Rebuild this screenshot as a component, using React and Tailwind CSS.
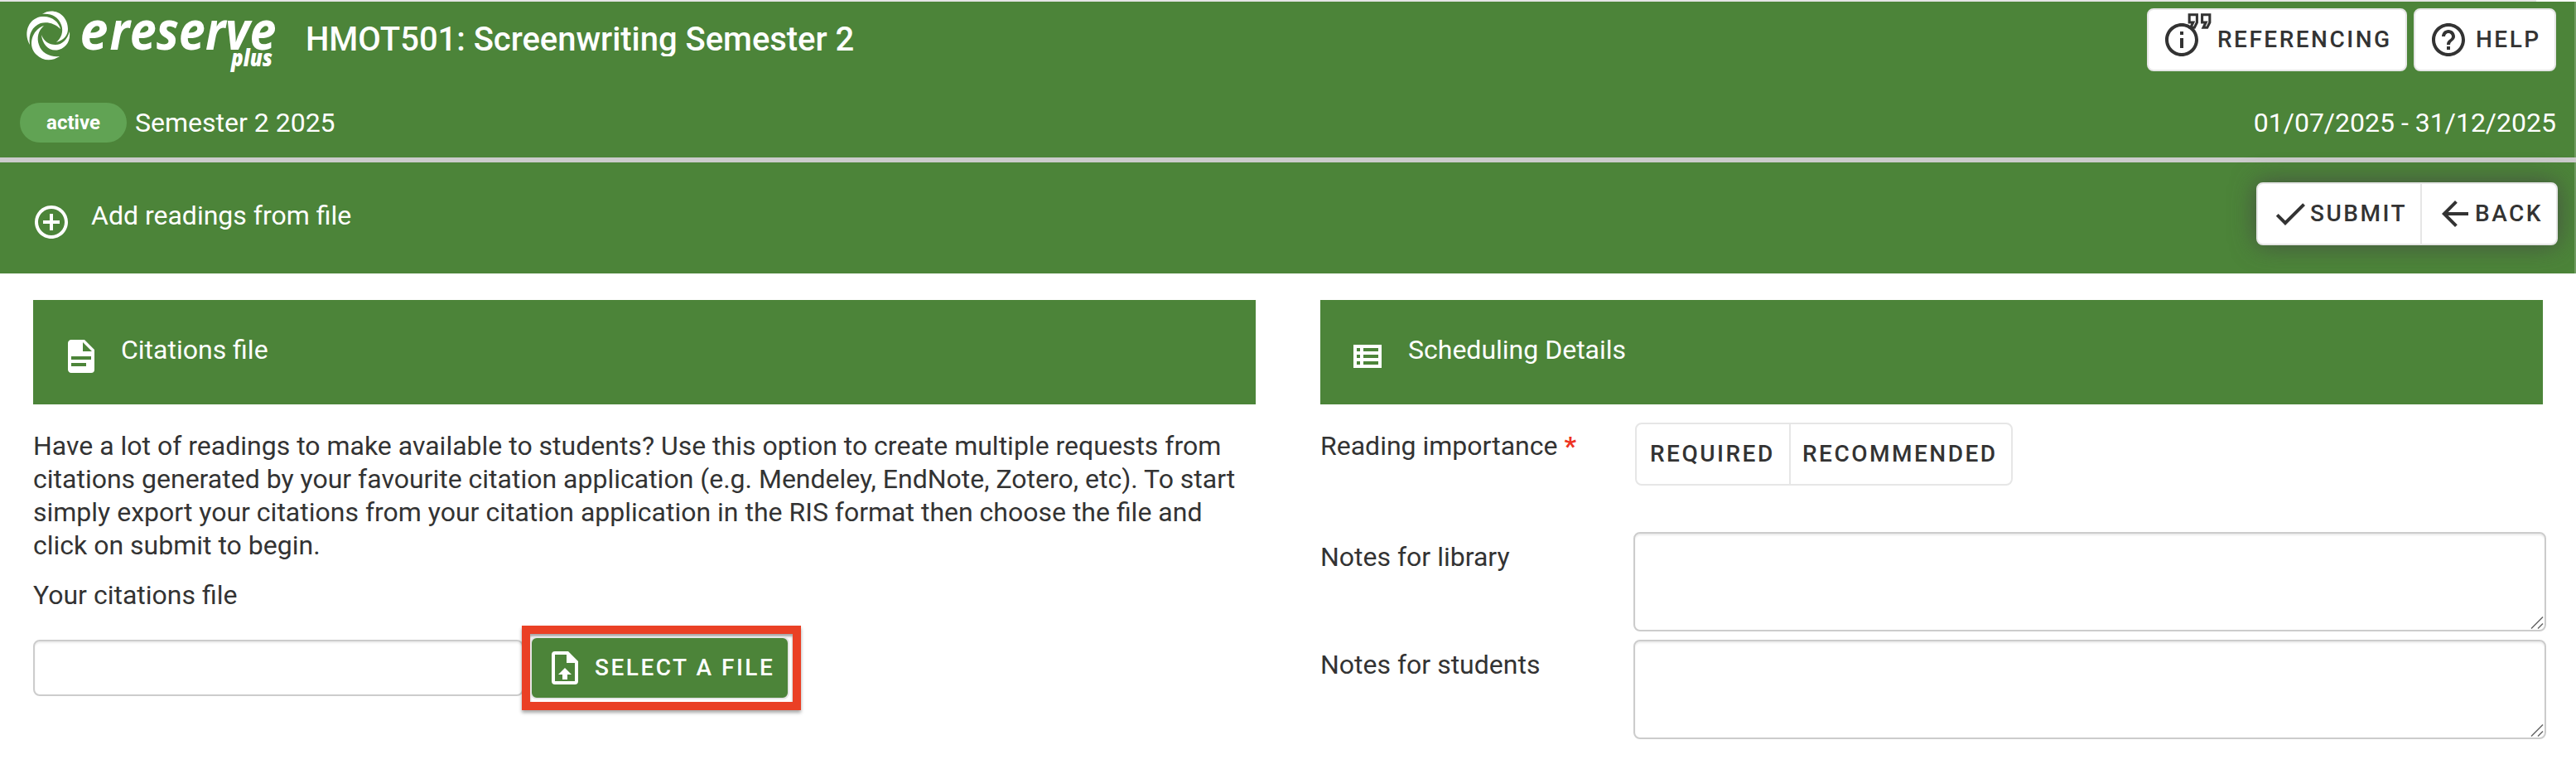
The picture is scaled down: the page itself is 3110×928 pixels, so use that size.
import React from 'react';
import { MdAddCircleOutline, MdArrowBack, MdCheck, MdHelpOutline, MdInfoOutline, MdOutlineFormatQuote } from 'react-icons/md';

const FileDocumentIcon = () => (
    <svg viewBox="0 0 24 24" className="size-12 shrink-0" fill="currentColor">
        <path d="M13 9h5.500L13 3.500V9M6 2h8l6 6v12a2 2 0 0 1-2 2H6c-1.110 0-2-.9-2-2V4c0-1.110.89-2 2-2m9 16v-2H6v2h9m3-4v-2H6v2h12z" />
    </svg>
);

const ListIcon = () => (
    <svg viewBox="0 0 24 24" className="size-12 shrink-0" fill="currentColor" fillRule="evenodd">
        <path d="M3 5h17v14H3zM5 7v2h2V7zM9 7v2h9V7zM5 11v2h2v-2zM9 11v2h9v-2zM5 15v2h2v-2zM9 15v2h9v-2z" />
    </svg>
);

const FileUploadIcon = () => (
    <svg viewBox="0 0 24 24" className="size-12 shrink-0" fill="currentColor">
        <path d="M14 2l6 6v12a2 2 0 0 1-2 2H6a2 2 0 0 1-2-2V4a2 2 0 0 1 2-2h8m4 18V9h-5V4H6v16h12m-6-8l4 4h-2.500v3h-3v-3H8l4-4z" />
    </svg>
);

const Logo = () => (
    <svg viewBox="0 0 320 84" className="h-[84px] w-[320px] shrink-0 overflow-visible" fill="#fff">
        {/* swirl */}
        <path d="M27 11C40 2 58 11 58 29C58 36 54 42 44 45C50 40 53 32 50 24C46 14 38 10 27 11Z" />
        <path d="M12 48C3 32 12 15 27 14C38 13 47 20 49 29C42 22 33 20 25 22C15 26 10 35 12 48Z" />
        <path d="M29 25C14 30 9 50 20 60C28 68 39 68 48 62C36 63 26 58 23 48C20 40 22 31 29 25Z" />
        <path d="M26 36C27 48 36 57 47 54C57 51 61 43 60 32C57 42 51 48 43 48C35 48 29 44 26 36Z" />
        <g fontFamily="'Open Sans', sans-serif" fontStyle="italic" fontWeight="700">
            <text x="72.500" y="54" fontSize="64" textLength="34" lengthAdjust="spacingAndGlyphs">e</text>
            <text x="108.500" y="54" fontSize="64" textLength="201" lengthAdjust="spacingAndGlyphs">reserve</text>
            <text x="255" y="74" fontSize="29" fontWeight="800" textLength="50" lengthAdjust="spacingAndGlyphs">plus</text>
        </g>
    </svg>
);

const SectionHeader = ({ icon, title }) => (
    <div className="flex h-[126px] bg-[#4c8439] pl-[34px] text-white">
        <div className="mt-11">{icon}</div>
        <h2 className="mt-10 ml-6">{title}</h2>
    </div>
);

const NotesField = ({ label }) => (
    <div className="flex h-[130px]">
        <label className="mt-2.5 w-[378px] shrink-0">{label}</label>
        <div className="relative h-[120px] w-[1102px] rounded-lg border-2 border-[#ccc] bg-white shadow-[inset_0_2px_2px_rgba(0,0,0,0.075)]">
            <svg viewBox="0 0 16 16" className="absolute right-px bottom-0 size-4" stroke="#666" strokeWidth="1.500">
                <path d="M1 14.500L15 .5M9 14.500L15 8.500" />
            </svg>
        </div>
    </div>
);

const App = () => {
    return (
        <div className="h-[928px] w-[3110px] overflow-hidden bg-white font-['Roboto',sans-serif] text-[32px] leading-10 text-[#333]">
            <div className="h-0.5 w-[3062px] bg-[#e5e5e5]"></div>

            {/* Course header */}
            <header className="h-[188px] border-r-2 border-[#6f9c60] bg-[#4c8439] text-white">
                <div className="flex h-[110px] pl-6">
                    <div className="mt-1"><Logo /></div>
                    <h1 className="mt-6 ml-[25px] h-[42px] overflow-hidden text-[40px] leading-[44px] font-medium tracking-[-0.04px] whitespace-nowrap">HMOT501: Screenwriting Semester 2</h1>
                    <div className="mt-2 mr-[22px] ml-auto flex gap-2 text-[28px] font-medium tracking-[2.5px] text-[#333]">
                        <button className="relative flex h-[76px] w-[314px] items-center rounded-lg border-2 border-[#e6e6e6] bg-white pl-4">
                            <MdInfoOutline className="size-12" />
                            <MdOutlineFormatQuote className="absolute -top-[5px] left-[43px] size-[37px]" />
                            <span className="ml-[19px]">REFERENCING</span>
                        </button>
                        <button className="flex h-[76px] w-[172px] items-center rounded-lg border-2 border-[#e6e6e6] bg-white pl-4">
                            <MdHelpOutline className="size-12" />
                            <span className="ml-[9px]">HELP</span>
                        </button>
                    </div>
                </div>
                <div className="flex items-center pt-3 pr-[22px] pl-6">
                    <span className="flex h-12 w-[129px] items-center justify-center rounded-full bg-[#61a354] text-[24px] font-bold">active</span>
                    <span className="ml-2.5">Semester 2 2025</span>
                    <span className="ml-auto">01/07/2025 - 31/12/2025</span>
                </div>
            </header>
            <div className="h-1.5 bg-[#ccc]"></div>

            {/* Action bar */}
            <div className="flex h-[134px] border-r-2 border-[#6f9c60] bg-[#4c8439] pl-[38px] text-white">
                <MdAddCircleOutline className="mt-12 size-12" />
                <h2 className="mt-11 ml-6">Add readings from file</h2>
                <div className="mt-6 mr-5 ml-auto flex h-[76px] w-[364px] rounded-lg border-2 border-[#e6e6e6] bg-white text-[28px] font-medium tracking-[2.5px] text-[#333] shadow-[0_0_30px_rgba(68,68,68,0.8)]">
                    <button className="flex w-[198px] items-center border-r-2 border-[#e6e6e6] pl-[15px]">
                        <MdCheck className="size-12" />SUBMIT
                    </button>
                    <button className="flex items-center pl-4">
                        <MdArrowBack className="size-12" />BACK
                    </button>
                </div>
            </div>

            <main className="flex gap-[78px] px-10 pt-8">
                <section className="w-[1476px] shrink-0">
                    <SectionHeader icon={<FileDocumentIcon />} title="Citations file" />
                    <p className="mt-[30px]">
                        Have a lot of readings to make available to students? Use this option to create multiple requests from citations generated by your favourite citation application (e.g. Mendeley, EndNote, Zotero, etc). To start simply export your citations from your citation application in the RIS format then choose the file and click on submit to begin.
                    </p>
                    <label className="mt-5 block">Your citations file</label>
                    <div className="mt-[17px] flex">
                        <div className="mt-[17px] h-[68px] w-[592px] rounded-lg border-2 border-[#ccc] shadow-[inset_0_2px_2px_rgba(0,0,0,0.075)]"></div>
                        <div className="-ml-0.5 h-[102px] w-[337px] border-[10px] border-[#ea4025] pt-[3px] shadow-[0_3px_4px_rgba(0,0,0,0.35),inset_0_3px_3px_rgba(0,0,0,0.35)]">
                            <button className="flex h-[76px] w-[313px] items-center rounded-lg border-2 border-[#e6e6e6] bg-[#4c8439] pl-4 text-[28px] font-medium tracking-[2.5px] text-white">
                                <FileUploadIcon />
                                <span className="ml-3 whitespace-nowrap">SELECT A FILE</span>
                            </button>
                        </div>
                    </div>
                </section>

                <section className="w-[1480px] shrink-0">
                    <div className="w-[1476px]">
                        <SectionHeader icon={<ListIcon />} title="Scheduling Details" />
                    </div>
                    <div className="flex h-[154px] pt-[22px]">
                        <label className="mt-2 w-[380px]">Reading importance <span className="font-bold text-[#ee3322]">*</span></label>
                        <div className="flex h-[76px] w-[456px] items-center rounded-lg border-2 border-[#e6e6e6] text-[28px] font-medium tracking-[2.5px]">
                            <button className="h-full w-[186px] border-r-2 border-[#e6e6e6] pl-4 text-left">REQUIRED</button>
                            <button className="pl-3.5">RECOMMENDED</button>
                        </div>
                    </div>
                    <NotesField label="Notes for library" />
                    <NotesField label="Notes for students" />
                </section>
            </main>
        </div>
    );
};

export default App;
